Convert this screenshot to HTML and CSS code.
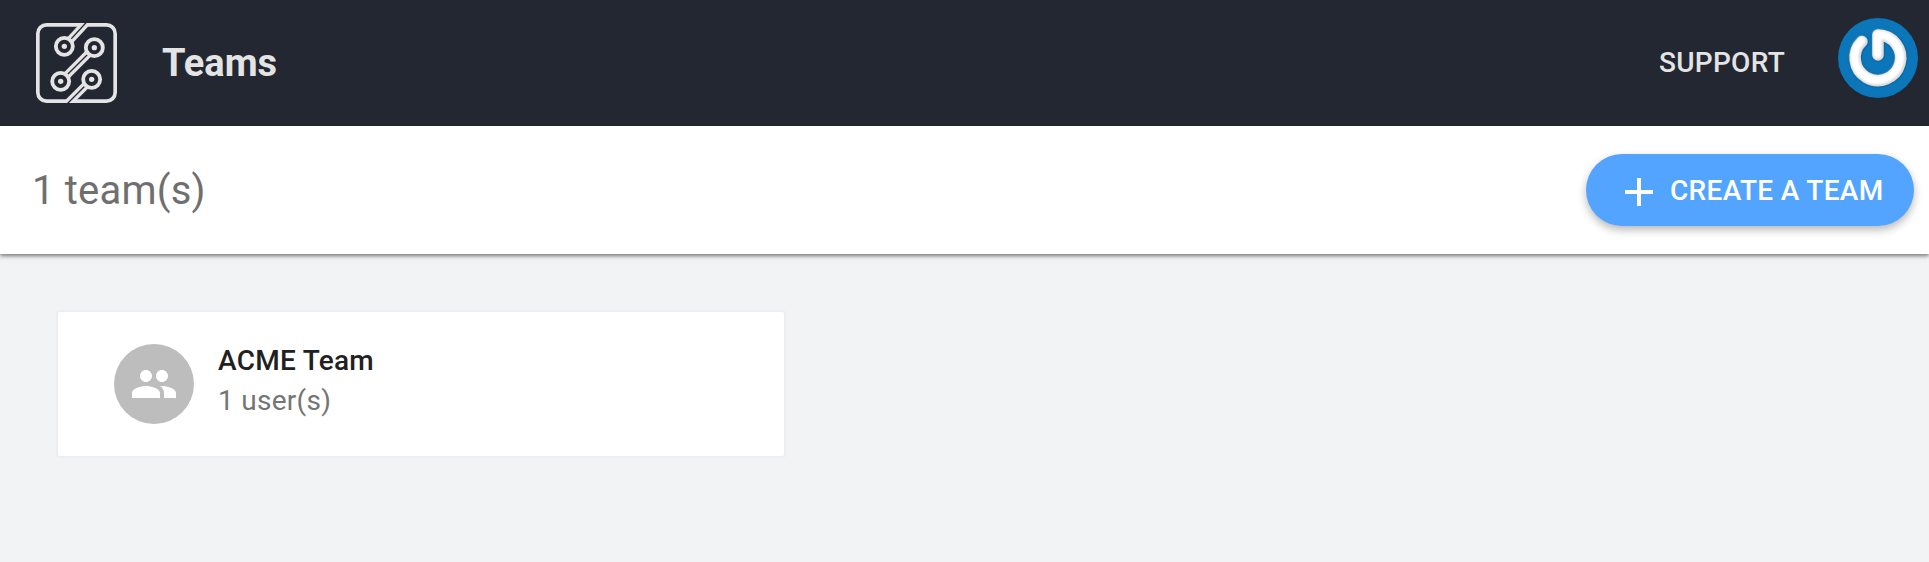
FILE: index.html
```html
<!DOCTYPE html>
<html lang="en">
<head>
<meta charset="utf-8">
<title>Teams</title>
<link rel="stylesheet" href="styles.css">
</head>
<body>
<header class="topbar">
  <svg class="logo" viewBox="48 39 243 240">
    <g fill="none" stroke="#e4e4e5">
      <rect x="53.500" y="44.500" width="232" height="229" rx="26" stroke-width="11"/>
      <path d="M198 39L133 109M223 113L122 214M215 208L145 278" stroke-width="24"/>
      <path d="M201 35L133 109M223 113L122 214M215 208L141 282" stroke="#232731" stroke-width="4"/>
    </g>
    <g fill="#232731" stroke="#e4e4e5" stroke-width="11.500">
      <circle cx="133" cy="109" r="25.500"/><circle cx="223" cy="113" r="25.500"/>
      <circle cx="122" cy="214" r="25.500"/><circle cx="215" cy="208" r="25.500"/>
    </g>
    <g fill="#e4e4e5">
      <circle cx="133" cy="109" r="8"/><circle cx="223" cy="113" r="8"/>
      <circle cx="122" cy="214" r="8"/><circle cx="215" cy="208" r="8"/>
    </g>
  </svg>
  <h1 class="title">Teams</h1>
  <a class="support">SUPPORT</a>
  <svg class="avatar" viewBox="0 0 80 80">
    <defs><filter id="soft" x="-20%" y="-20%" width="140%" height="140%"><feGaussianBlur stdDeviation="1"/></filter></defs>
    <circle cx="40" cy="40" r="40" fill="#0b76b9"/>
    <g fill="none" stroke-linecap="round" stroke-linejoin="round">
      <path d="M24 23.500A22.800 22.800 0 1 0 40 17V37" stroke="#075b91" stroke-width="12" filter="url(#soft)"/>
      <path d="M24 23.500A22.800 22.800 0 1 0 40 17V37" stroke="#d8d8d8" stroke-width="11.500"/>
      <path d="M24 23.500A22.800 22.800 0 1 0 40 17V37" stroke="#fff" stroke-width="8.500" filter="url(#soft)" transform="translate(-.7 -.7)"/>
    </g>
  </svg>
</header>
<section class="toolbar">
  <h2 class="count">1 team(s)</h2>
  <button class="create">
    <svg class="plus" viewBox="0 0 28 28"><path d="M12 0h4v12h12v4H16v12h-4V16H0v-4h12z" fill="#fff"/></svg>
    <span class="label">CREATE A TEAM</span>
  </button>
</section>
<main class="content">
  <article class="card">
    <div class="badge">
      <svg class="people" viewBox="0 0 24 24"><path fill="#fff" d="M16 11c1.660 0 2.990-1.340 2.990-3S17.660 5 16 5s-3 1.340-3 3 1.340 3 3 3zm-8 0c1.660 0 2.990-1.340 2.990-3S9.660 5 8 5 5 6.340 5 8s1.340 3 3 3zm0 2c-2.330 0-7 1.170-7 3.500V19h14v-2.500c0-2.330-4.670-3.500-7-3.500zm8 0c-.29 0-.62.020-.97.050 1.160.84 1.970 1.970 1.970 3.450V19h6v-2.500c0-2.330-4.670-3.500-7-3.500z"/></svg>
    </div>
    <div class="info">
      <div class="name">ACME Team</div>
      <div class="users">1 user(s)</div>
    </div>
  </article>
</main>
</body>
</html>
```
FILE: styles.css
```css
* { box-sizing: border-box; }
body {
  margin: 0;
  height: 562px;
  overflow: hidden;
  background: #f2f3f5;
  font-family: Roboto, "Liberation Sans", sans-serif;
}
.topbar {
  display: flex;
  height: 126px;
  padding: 0 11px 0 36px;
  align-items: center;
  background: #232731;
  color: #e4e4e5;
}
.logo { width: 81px; height: 80px; }
.title { margin: 0 auto 0 45px; font-size: 38px; font-weight: 700; line-height: 48px; }
.support { margin-right: 53px; font-size: 28px; font-weight: 500; line-height: 32px; letter-spacing: 0.28px; }
.avatar { width: 80px; height: 80px; margin-bottom: 10px; }
.toolbar {
  position: relative;
  display: flex;
  justify-content: space-between;
  align-items: center;
  height: 128px;
  padding: 0 15px 0 32px;
  background: #fff;
  box-shadow: 0 2px 4px rgba(0, 0, 0, 0.5);
}
.count { margin: 0; padding-top: 2px; font-size: 40px; font-weight: 400; color: #6f6f6f; line-height: 48px; letter-spacing: 0.2px; }
.create {
  display: flex;
  align-items: center;
  width: 328px;
  height: 72px;
  padding: 0 0 0 39px;
  border: 0;
  border-radius: 36px;
  background: #52a4ff;
  color: #fff;
  font: 500 28px/36px Roboto, sans-serif;
  letter-spacing: 0.33px;
  box-shadow: 0 4px 8px rgba(0, 0, 0, 0.28);
}
.plus { width: 28px; height: 28px; margin: 4px 17px 0 0; }
.label { padding-top: 2px; white-space: nowrap; }
.content { padding: 56px; }
.card {
  display: flex;
  width: 730px;
  height: 148px;
  padding: 32px 56px;
  border: 2px solid #edeef0;
  border-radius: 4px;
  background: #fff;
}
.badge { display: flex; justify-content: center; align-items: center; width: 80px; height: 80px; border-radius: 50%; background: #bdbdbd; }
.people { width: 48px; height: 48px; }
.info { margin-left: 24px; font-size: 28px; line-height: 40px; letter-spacing: 0.28px; }
.name { font-weight: 500; color: #212121; margin-top: -3px; }
.users { color: #757575; }
```
